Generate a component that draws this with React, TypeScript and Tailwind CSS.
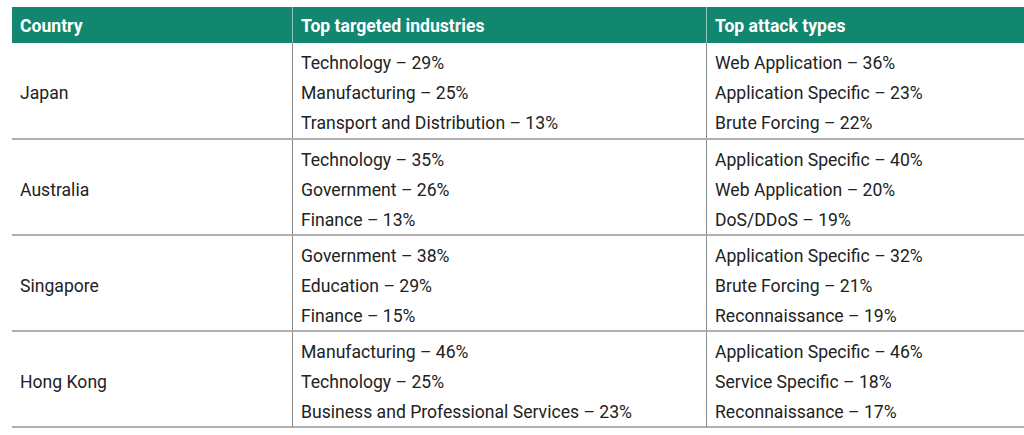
import React from 'react';

type Row = {
  country: string;
  industries: string[];
  attacks: string[];
};

const rows: Row[] = [
  {
    country: 'Japan',
    industries: ['Technology – 29%', 'Manufacturing – 25%', 'Transport and Distribution – 13%'],
    attacks: ['Web Application – 36%', 'Application Specific – 23%', 'Brute Forcing – 22%'],
  },
  {
    country: 'Australia',
    industries: ['Technology – 35%', 'Government – 26%', 'Finance – 13%'],
    attacks: ['Application Specific – 40%', 'Web Application – 20%', 'DoS/DDoS – 19%'],
  },
  {
    country: 'Singapore',
    industries: ['Government – 38%', 'Education – 29%', 'Finance – 15%'],
    attacks: ['Application Specific – 32%', 'Brute Forcing – 21%', 'Reconnaissance – 19%'],
  },
  {
    country: 'Hong Kong',
    industries: ['Manufacturing – 46%', 'Technology – 25%', 'Business and Professional Services – 23%'],
    attacks: ['Application Specific – 46%', 'Service Specific – 18%', 'Reconnaissance – 17%'],
  },
];

export default function App() {
  return (
    <div
      className="w-[1024px] h-[435px] bg-white pt-[7px] pl-[12px] overflow-hidden"
      style={{ fontFamily: 'Roboto, "Liberation Sans", sans-serif' }}
    >
      {/* Header */}
      <div className="grid grid-cols-[280px_414px_1fr] bg-[#12876f] text-white font-bold text-[17.6px] h-[36px]">
        <div className="flex items-center pl-[8px] pt-[3px]">Country</div>
        <div className="flex items-center pl-[8px] pt-[3px] border-l border-[#8fc9bb]">Top targeted industries</div>
        <div className="flex items-center pl-[8px] pt-[3px] border-l border-[#8fc9bb]">Top attack types</div>
      </div>

      {/* Body */}
      {rows.map((row, i) => (
        <div
          key={row.country}
          className={`grid grid-cols-[280px_414px_1fr] border-b-2 border-[#b0b0b0] text-[#222222] text-[17.6px] ${i === 0 ? 'h-[97px]' : 'h-[96px]'}`}
        >
          <div className="flex items-center pl-[8px] pt-[6px]">{row.country}</div>
          <div className="border-l border-[#8c8c8c] pl-[8px] pt-[5px] leading-[30px]">
            {row.industries.map((t) => (
              <div key={t}>{t}</div>
            ))}
          </div>
          <div className="border-l border-[#8c8c8c] pl-[8px] pt-[5px] leading-[30px]">
            {row.attacks.map((t) => (
              <div key={t}>{t}</div>
            ))}
          </div>
        </div>
      ))}
    </div>
  );
}
